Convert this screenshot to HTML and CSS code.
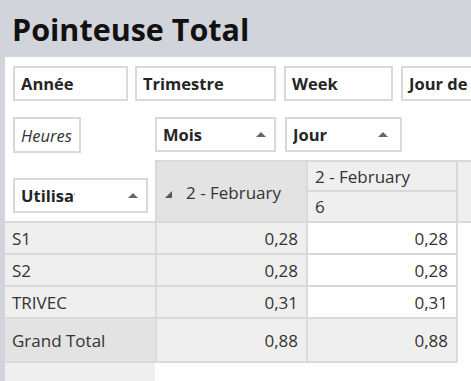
FILE: index.html
```html
<!DOCTYPE html>
<html lang="fr">
<head>
  <meta charset="UTF-8">
  <meta name="viewport" content="width=device-width, initial-scale=1.0">
  <title>Pointeuse Total</title>
  <link rel="stylesheet" href="styles.css">
</head>
<body>
  <h1 class="title">Pointeuse Total</h1>

  <div class="panel">
    <div class="filters">
      <div class="field field-annee">Année</div>
      <div class="field field-trimestre">Trimestre</div>
      <div class="field field-week">Week</div>
      <div class="field field-jourde">Jour de la semaine</div>
    </div>

    <div class="pivot">
      <div class="corner">
        <div class="field field-values">Heures</div>
        <div class="field field-row">
          <span class="field-name">Utilisateur</span>
          <span class="sort-arrow"></span>
        </div>
      </div>

      <div class="col-fields">
        <div class="field field-mois">
          <span class="field-name">Mois</span>
          <span class="sort-arrow"></span>
        </div>
        <div class="field field-jour">
          <span class="field-name">Jour</span>
          <span class="sort-arrow"></span>
        </div>
      </div>

      <!-- column headers -->
      <div class="col-head col-head-month">
        <svg class="expand" width="7" height="7" viewBox="0 0 7 7"><polygon points="7,0 7,7 0,7" fill="#595959"/></svg>
        2 - February
      </div>
      <div class="col-head col-head-top">2 - February</div>
      <div class="col-head col-head-day">6</div>
      <div class="col-head col-head-fill"></div>

      <!-- rows -->
      <div class="row-head">S1</div>
      <div class="cell cell-sub">0,28</div>
      <div class="cell">0,28</div>
      <div class="cell-empty"></div>

      <div class="row-head">S2</div>
      <div class="cell cell-sub">0,28</div>
      <div class="cell">0,28</div>
      <div class="cell-empty"></div>

      <div class="row-head">TRIVEC</div>
      <div class="cell cell-sub">0,31</div>
      <div class="cell">0,31</div>
      <div class="cell-empty"></div>

      <div class="row-head row-total">Grand Total</div>
      <div class="cell cell-sub cell-total">0,88</div>
      <div class="cell cell-total">0,88</div>
      <div class="cell-empty"></div>

      <div class="row-rest"></div>
    </div>
  </div>
</body>
</html>
```

FILE: styles.css
```css
html, body {
  height: 100%;
}

body {
  margin: 0;
  background-color: #d1d5db;
  font-family: 'Open Sans', 'Liberation Sans', sans-serif;
  color: #333;
  overflow: hidden;
}

.title {
  margin: 0;
  height: 57px;
  padding-left: 12px;
  display: flex;
  align-items: center;
  font-size: 30.5px;
  font-weight: bold;
  color: #111;
  white-space: nowrap;
}

.panel {
  margin-left: 5px;
  background-color: #fff;
  height: calc(100% - 57px);
  overflow: hidden;
}

.filters {
  display: flex;
  gap: 7px;
  padding: 9px 0 0 8px;
  height: 35px;
}

.field {
  box-sizing: border-box;
  height: 35px;
  flex-shrink: 0;
  border: 2px solid #d9d9d9;
  background-color: #fff;
  padding: 0 6px;
  display: flex;
  align-items: center;
  font-size: 16.5px;
  font-weight: bold;
  color: #252525;
  white-space: nowrap;
  overflow: hidden;
}

.field-annee { width: 115px; }
.field-trimestre { width: 141px; }
.field-week { width: 109px; margin-left: 1px; }
.field-jourde { width: 140px; margin-left: 1px; }

.field-name {
  flex: 1;
  overflow: hidden;
}

.sort-arrow {
  flex-shrink: 0;
  width: 0;
  height: 0;
  margin-left: 6px;
  border-left: 5px solid transparent;
  border-right: 5px solid transparent;
  border-bottom: 5px solid #666;
}

.pivot {
  display: grid;
  grid-template-columns: 150px 153px 150px 1fr;
  grid-template-rows: 59px 32px 31px 32px 32px 32px 44px 1fr;
  height: calc(100% - 44px);
  font-size: 17px;
}

.corner {
  grid-column: 1;
  grid-row: 1 / 4;
  display: flex;
  flex-direction: column;
  justify-content: space-between;
  align-items: flex-start;
  padding: 16px 0 8px 8px;
  border-bottom: 2px solid #d9d9d9;
}

.field-values {
  width: 68px;
  height: 36px;
  font-weight: normal;
  font-style: italic;
  color: #333;
}

.field-row {
  width: 135px;
  padding-right: 8px;
}

.field-row .field-name {
  flex: none;
  width: 54px;
}

.field-row .sort-arrow {
  margin-left: auto;
}

.col-fields {
  grid-column: 2 / 5;
  grid-row: 1;
  display: flex;
  gap: 9px;
  padding-top: 16px;
}

.field-mois { width: 121px; padding-right: 8px; }
.field-jour { width: 117px; padding-right: 12px; }

.col-head {
  box-sizing: border-box;
  display: flex;
  align-items: center;
  padding-left: 7px;
  border-top: 2px solid #d9d9d9;
  border-right: 2px solid #d9d9d9;
  border-bottom: 2px solid #d9d9d9;
  background-color: #efefef;
  white-space: nowrap;
}

.col-head-month {
  grid-column: 2;
  grid-row: 2 / 4;
  background-color: #e3e3e3;
  border-left: 2px solid #d9d9d9;
  padding-left: 8px;
  padding-top: 2px;
}

.expand {
  margin-right: 14px;
  margin-top: 4px;
}

.col-head-top {
  grid-column: 3;
  grid-row: 2;
}

.col-head-day {
  grid-column: 3;
  grid-row: 3;
  border-top: none;
}

.col-head-fill {
  grid-column: 4;
  grid-row: 2 / 4;
  border-right: none;
}

.row-head,
.cell {
  box-sizing: border-box;
  display: flex;
  align-items: center;
  border-bottom: 2px solid #d9d9d9;
  white-space: nowrap;
}

.row-head {
  grid-column: 1;
  padding-left: 7px;
  background-color: #efefef;
}

.row-total {
  background-color: #e3e3e3;
}

.cell {
  justify-content: flex-end;
  padding-right: 8px;
  border-right: 2px solid #d9d9d9;
  background-color: #fff;
}

.cell-sub {
  border-left: 2px solid #d9d9d9;
  background-color: #efefef;
}

.cell-total {
  background-color: #efefef;
}

.cell-empty {
  background-color: #fff;
}

.row-rest {
  grid-column: 1;
  background-color: #efefef;
}
```
